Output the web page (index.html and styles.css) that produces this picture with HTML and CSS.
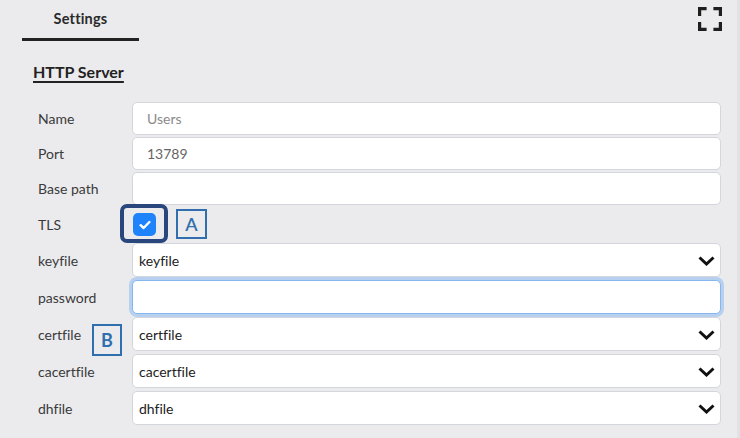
FILE: index.html
```html
<!DOCTYPE html>
<html>
<head>
<meta charset="utf-8">
<link rel="stylesheet" href="styles.css">
</head>
<body>
<div class="page">
  <div class="header">
    <div class="tab">Settings</div>
    <svg class="expand" width="24" height="24" viewBox="0 0 24 24" fill="none" stroke="#1e1e1e" stroke-width="3.2" stroke-linecap="butt" stroke-linejoin="miter">
      <path d="M1.6 9V1.6H8.6"/>
      <path d="M15.4 1.6H22.4V9"/>
      <path d="M22.4 15V22.4H15.4"/>
      <path d="M8.6 22.4H1.6V15"/>
    </svg>
  </div>
  <h2 class="section-title">HTTP Server</h2>
  <div class="form">
    <div class="row txt">
      <label class="lbl">Name</label>
      <div class="field placeholder">Users</div>
    </div>
    <div class="row txt">
      <label class="lbl">Port</label>
      <div class="field value-muted">13789</div>
    </div>
    <div class="row txt">
      <label class="lbl">Base path</label>
      <div class="field"></div>
    </div>
    <div class="row tls">
      <label class="lbl">TLS</label>
      <div class="tls-cell">
        <span class="check-frame"></span>
        <span class="checkbox">
          <svg width="12" height="10" viewBox="0 0 12 10" fill="none" stroke="#fff" stroke-width="2.4" stroke-linecap="round" stroke-linejoin="round"><path d="M1.6 5.2L4.6 8L10.4 2"/></svg>
        </span>
        <span class="tag tag-a">A</span>
      </div>
    </div>
    <div class="row sel">
      <label class="lbl">keyfile</label>
      <div class="select"><span>keyfile</span><svg class="chev" width="17" height="10" viewBox="0 0 17 10" fill="none" stroke="#111" stroke-width="3" stroke-linejoin="miter"><path d="M1.5 1.5L8.5 8L15.5 1.5"/></svg></div>
    </div>
    <div class="row sel">
      <label class="lbl">password</label>
      <div class="field focused"></div>
    </div>
    <div class="row sel">
      <label class="lbl">certfile</label>
      <span class="tag tag-b">B</span>
      <div class="select"><span>certfile</span><svg class="chev" width="17" height="10" viewBox="0 0 17 10" fill="none" stroke="#111" stroke-width="3" stroke-linejoin="miter"><path d="M1.5 1.5L8.5 8L15.5 1.5"/></svg></div>
    </div>
    <div class="row sel">
      <label class="lbl">cacertfile</label>
      <div class="select"><span>cacertfile</span><svg class="chev" width="17" height="10" viewBox="0 0 17 10" fill="none" stroke="#111" stroke-width="3" stroke-linejoin="miter"><path d="M1.5 1.5L8.5 8L15.5 1.5"/></svg></div>
    </div>
    <div class="row sel">
      <label class="lbl">dhfile</label>
      <div class="select"><span>dhfile</span><svg class="chev" width="17" height="10" viewBox="0 0 17 10" fill="none" stroke="#111" stroke-width="3" stroke-linejoin="miter"><path d="M1.5 1.5L8.5 8L15.5 1.5"/></svg></div>
    </div>
  </div>
</div>
</body>
</html>
```
FILE: styles.css
```css
html, body {
  margin: 0;
  padding: 0;
}
body {
  background: #ebebed;
  font-family: Lato, "Open Sans", "Liberation Sans", sans-serif;
  font-variant-ligatures: none;
  color: #333;
  width: 740px;
  height: 438px;
  overflow: hidden;
}
.page {
  height: 438px;
  border-right: 3px solid #e2e2e4;
  box-sizing: border-box;
  width: 740px;
}
.header {
  display: flex;
  justify-content: space-between;
  align-items: flex-start;
  padding: 0 15px 0 22px;
  height: 41px;
}
.tab {
  width: 117px;
  height: 41px;
  box-sizing: border-box;
  border-bottom: 3px solid #222;
  text-align: center;
  font-size: 14.5px;
  font-weight: 700;
  color: #2a2a2a;
  padding-top: 10px;
  letter-spacing: 0.2px;
}
.expand {
  margin-top: 7px;
}
.section-title {
  margin: 21px 0 20px 33px;
  font-size: 16px;
  line-height: 20px;
  font-weight: 700;
  color: #222;
  text-decoration: underline;
  text-underline-offset: 3px;
  text-decoration-thickness: 1.5px;
}
.form {
  display: flex;
  flex-direction: column;
  padding: 0 16px 0 38px;
}
.row {
  display: grid;
  grid-template-columns: 94px 1fr;
  align-items: center;
  position: relative;
}
.row.txt + .row.txt {
  margin-top: 2px;
}
.row.sel + .row.sel {
  margin-top: 3px;
}
.lbl {
  font-size: 14px;
  color: #3a3a3a;
}
.field, .select {
  box-sizing: border-box;
  background: #fff;
  border: 1px solid #d3d6dc;
  border-radius: 5px;
  font-size: 14px;
}
.row.txt .field {
  height: 33px;
  padding: 0 14px;
  display: flex;
  align-items: center;
}
.placeholder {
  color: #8a8a8a;
}
.value-muted {
  color: #666;
}
.row.tls {
  height: 38px;
}
.tls-cell {
  display: flex;
  align-items: center;
  height: 38px;
  position: relative;
}
.check-frame {
  position: absolute;
  left: -12px;
  top: -1px;
  width: 48px;
  height: 39px;
  box-sizing: border-box;
  border: 4px solid #29477c;
  border-radius: 7px;
}
.checkbox {
  width: 23px;
  height: 23px;
  margin-left: 1px;
  margin-top: 1px;
  background: #1f84fb;
  border-radius: 5px;
  display: flex;
  align-items: center;
  justify-content: center;
}
.tag {
  box-sizing: border-box;
  border: 2px solid #2f6fae;
  color: #2f6fae;
  font-size: 18px;
  font-weight: 700;
  display: flex;
  align-items: center;
  justify-content: center;
}
.tag-a {
  width: 31px;
  height: 30px;
  margin-left: 20px;
  font-weight: 600;
}
.tag-b {
  position: absolute;
  left: 54px;
  top: 7px;
  width: 30px;
  height: 32px;
}
.row.sel .field, .select {
  height: 34px;
}
.select {
  display: flex;
  align-items: center;
  justify-content: space-between;
  padding: 0 5px 0 6px;
  color: #222;
}
.chev {
  display: block;
  margin-top: 1px;
}
.field.focused {
  border: 1px solid #86b6ef;
  box-shadow: 0 0 0 3px rgba(140, 185, 240, 0.55);
}
```
